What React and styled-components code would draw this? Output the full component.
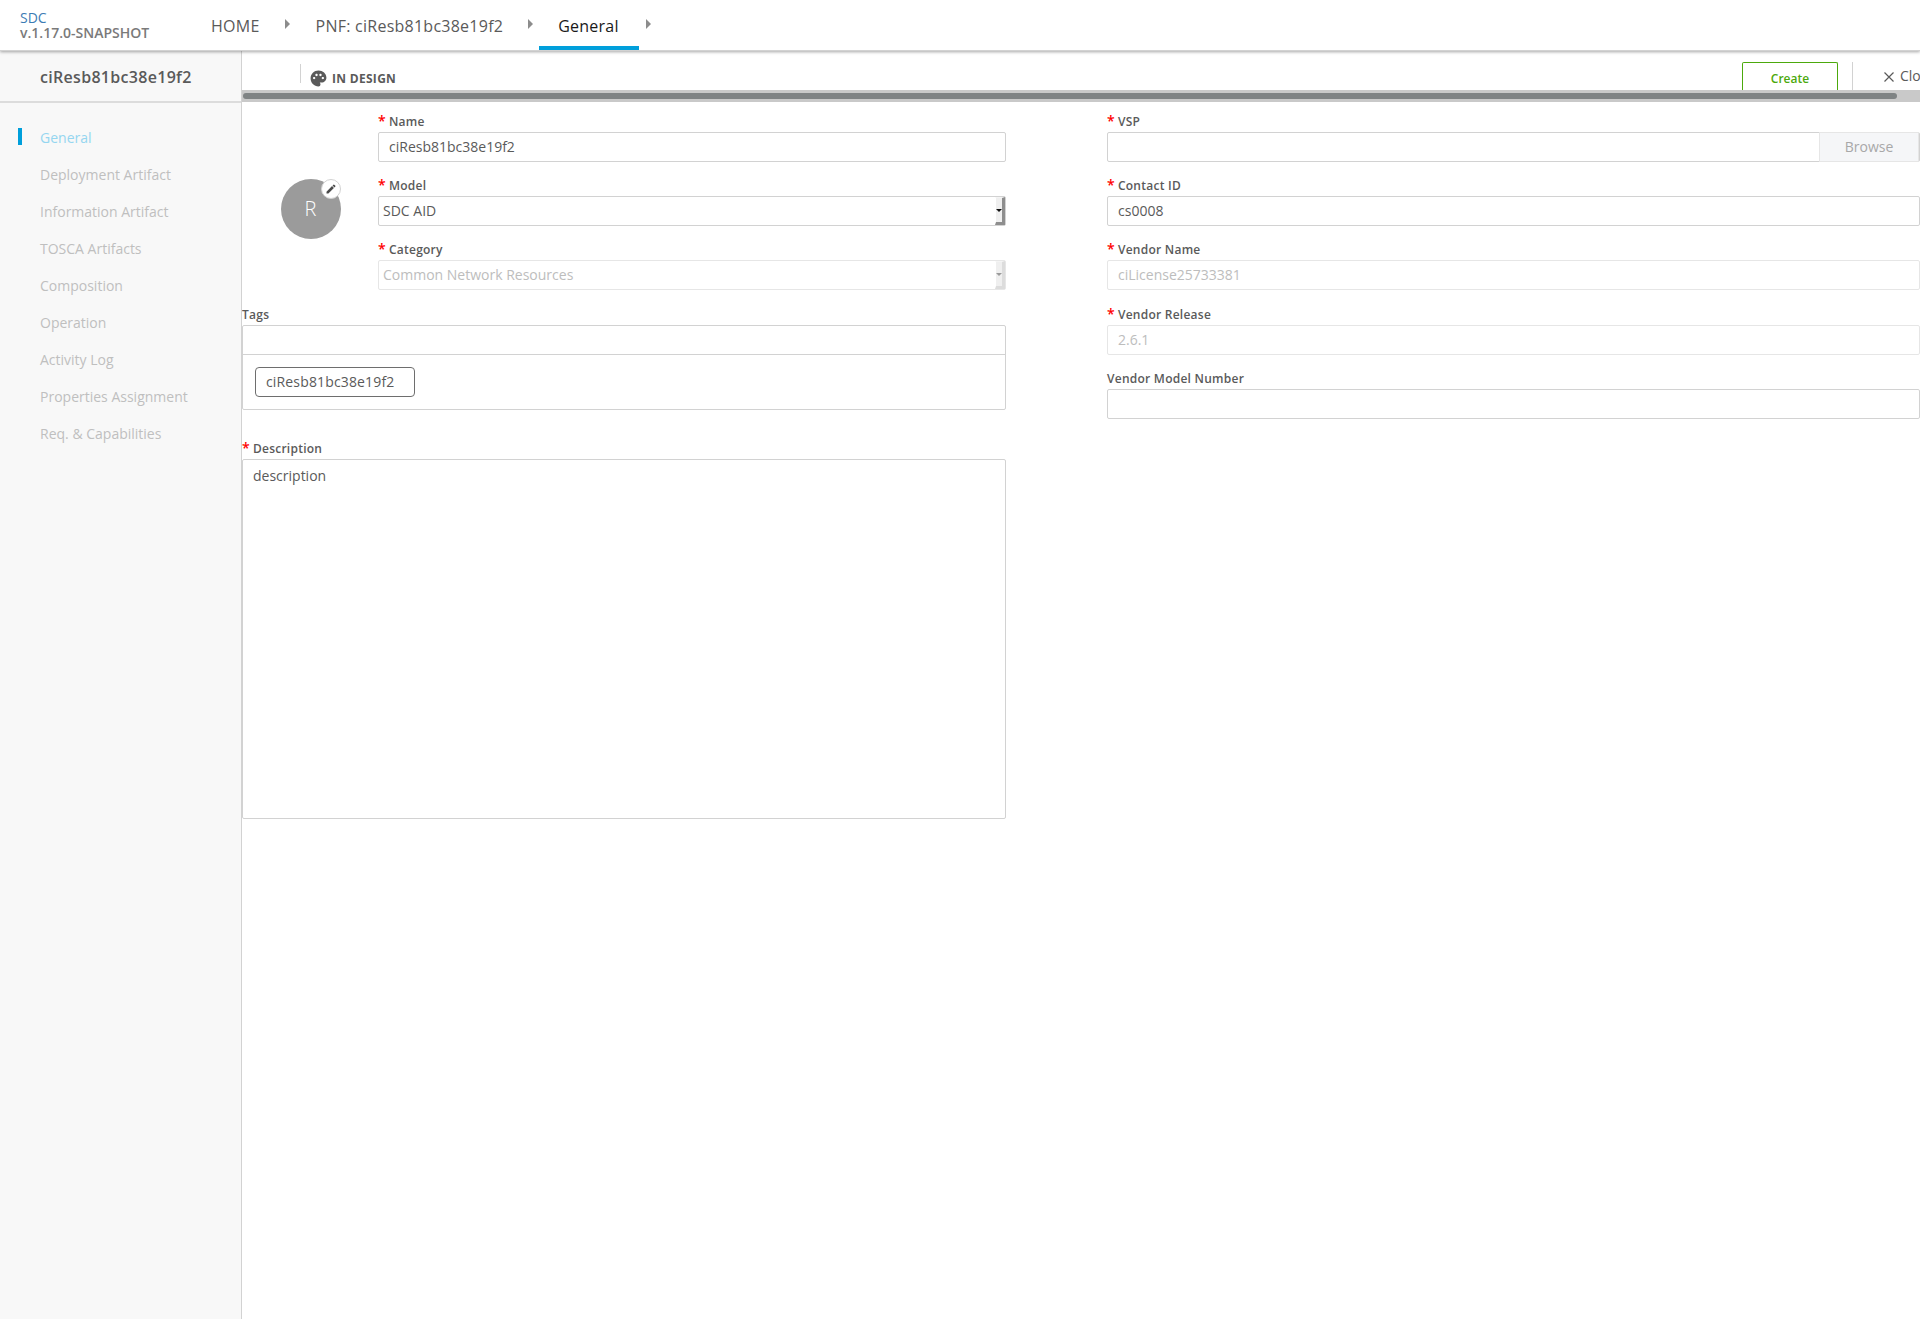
import React from 'react';
import styled, { createGlobalStyle } from 'styled-components';
import { MdPalette, MdEdit } from 'react-icons/md';

const Global = createGlobalStyle`
  html, body { margin: 0; padding: 0; height: 100%; background: #fff; overflow: hidden; }
  body { font-family: "Open Sans", "Liberation Sans", sans-serif; color: #5a5a5a; }
  * { box-sizing: border-box; }
`;

const Page = styled.div`
  width: 1920px; height: 1319px; display: flex; flex-direction: column; overflow: hidden;
`;
const Header = styled.header`
  height: 51px; flex: none; display: flex; align-items: stretch; background: #fff;
  box-shadow: 0 1px 3px rgba(0,0,0,.35); border-bottom: 1px solid #d2d2d2; position: relative; z-index: 2;
`;
const Brand = styled.div`
  width: 211px; padding: 10px 0 0 20px; flex: none;
`;
const BrandName = styled.div`
  color: #3c7cb4; font-size: 14px; font-weight: 500; line-height: 15px;
`;
const BrandVersion = styled.div`
  color: #7a7a7a; font-weight: 600; font-size: 14px; line-height: 16px;
`;
const Crumb = styled.div`
  font-size: 16px; line-height: 52px; height: 50px; color: ${p => (p.$active ? '#191919' : '#5a5a5a')};
  font-weight: ${p => (p.$active ? 500 : 400)}; letter-spacing: .25px; white-space: nowrap;
  padding: 0 ${p => (p.$active ? '19px' : '0')}; margin-left: ${p => p.$ml || 0}px;
  width: ${p => (p.$active ? '100px' : 'auto')};
  border-bottom: ${p => (p.$active ? '4px solid #009fdb' : '0')};
`;
const Chevron = styled.span`
  width: 0; height: 0; flex: none; border-left: 5px solid #8c8c8c; border-top: 5px solid transparent; border-bottom: 5px solid transparent;
  align-self: flex-start; margin-top: 19px; margin-left: ${p => p.$ml}px;
`;
const Body = styled.div`
  flex: 1; display: flex; min-height: 0;
`;
const Sidebar = styled.aside`
  width: 242px; flex: none; background: #f8f8f8; border-right: 1px solid #d2d2d2;
`;
const SideTitle = styled.div`
  height: 52px; border-bottom: 2px solid #dcdcdc; padding-left: 40px; font-size: 16px; font-weight: 600; letter-spacing: .3px; line-height: 52px; color: #5a5a5a;
`;
const Nav = styled.nav`
  padding-top: 16px;
`;
const NavItem = styled.div`
  height: 37px; line-height: 37px; font-size: 14px; padding-left: 40px; position: relative;
  color: ${p => (p.$active ? '#95d6f0' : '#bfbfbf')};
  &::before {
    content: ''; display: ${p => (p.$active ? 'block' : 'none')}; position: absolute; left: 18px; top: 9px; width: 4px; height: 17px; background: #009fdb;
  }
`;
const Main = styled.main`
  flex: 1; min-width: 0; display: flex; flex-direction: column; overflow: hidden;
`;
const Toolbar = styled.div`
  height: 39px; flex: none; display: flex; align-items: flex-start; padding-left: 58px; padding-top: 11px;
`;
const Divider = styled.span`
  width: 1px; height: ${p => p.$h}px; background: #d2d2d2; flex: none; margin-top: ${p => p.$mt}px;
`;
const Status = styled.div`
  display: flex; align-items: center; gap: 4px; margin-left: 8px; width: 91px; flex: none; font-size: 12px; font-weight: 700; letter-spacing: .3px; color: #5a5a5a; height: 28px; margin-top: 2px; white-space: nowrap;
  svg { color: #5a5a5a; flex: none; }
`;
const CreateButton = styled.div`
  margin-left: 1342px; margin-right: 14px; width: 96px; flex: none; height: 28px; border: 1px solid #4ca90c; border-bottom: 0; border-radius: 2px 2px 0 0;
  color: #4ca90c; font-size: 12px; font-weight: 600; text-align: center; line-height: 31px;
`;
const CloseButton = styled.div`
  display: flex; align-items: center; flex: none; margin-left: 30px; gap: 5px; color: #5a5a5a; font-size: 14px; white-space: nowrap; height: 26px;
  svg { margin-top: 3px; }
`;
const ScrollTrack = styled.div`
  height: 12px; flex: none; background: #c9c9c9; padding: 3px 0 0 1px;
`;
const ScrollThumb = styled.div`
  width: 1654px; height: 6px; border-radius: 3px; background: #7f8384;
`;
const Form = styled.div`
  flex: 1; display: grid; grid-template-columns: 764px 813px; column-gap: 101px; align-items: start; padding-top: 10px;
`;
const Column = styled.div`
  display: flex; flex-direction: column; min-width: 0;
`;
const TopRow = styled.div`
  display: flex; align-items: flex-start;
`;
const AvatarCol = styled.div`
  width: 136px; flex: none; padding: 67px 0 0 39px;
`;
const Avatar = styled.div`
  width: 60px; height: 60px; border-radius: 50%; background: #9b9b9b; color: #fff; font-size: 20px; font-weight: 300; padding: 0 1px 2px 0;
  display: flex; align-items: center; justify-content: center; position: relative;
`;
const EditBadge = styled.span`
  position: absolute; right: 0; top: 0; width: 20px; height: 20px; border-radius: 50%; background: #fff; border: 1px solid #d2d2d2;
  display: flex; align-items: center; justify-content: center; color: #4a4a4a;
`;
const Fields = styled.div`
  flex: 1; min-width: 0;
`;
const Field = styled.div`
  height: 64.2px;
`;
const Label = styled.div`
  height: 20px; font-size: 12px; font-weight: 600; letter-spacing: .25px; line-height: 20px; color: #5a5a5a; white-space: nowrap;
`;
const Star = styled.span`
  color: #f00; font-weight: 600; margin-right: 3px; font-size: 14px; line-height: 14px;
`;
const Input = styled.div`
  height: 30px; border: 1px solid ${p => (p.$disabled ? '#e6e6e6' : '#d2d2d2')}; border-radius: 2px; background: #fff;
  font-size: 14px; line-height: 28px; padding-left: ${p => (p.$select ? 4 : 10)}px; position: relative; display: flex;
  color: ${p => (p.$disabled ? '#bdbdbd' : '#5a5a5a')};
`;
const SelectArrow = styled.span`
  position: absolute; right: 0; top: 0; bottom: 0; width: 10px; background: #efefef;
  border-style: solid; border-width: 1px 3px 3px 1px; border-color: #f4f4f4 ${p => (p.$disabled ? '#dcdcdc' : '#8e8e8e')} ${p => (p.$disabled ? '#dcdcdc' : '#8e8e8e')} #fff;
  &::after {
    content: ''; position: absolute; left: 0; top: 11px; border-left: 3px solid transparent; border-right: 3px solid transparent;
    border-top: 3px solid ${p => (p.$disabled ? '#9a9a9a' : '#111')};
  }
`;
const Browse = styled.div`
  margin-left: auto; width: 100px; margin-top: -1px; margin-bottom: -1px; background: #f5f6f8; border: 1px solid #e6e6e6; color: #a8a8a8; text-align: center; line-height: 28px; font-size: 14px;
`;
const TagsBox = styled.div`
  height: 85px; border: 1px solid #d2d2d2; border-radius: 2px; display: flex; flex-direction: column;
`;
const TagsInput = styled.div`
  height: 29px; border-bottom: 1px solid #d2d2d2; flex: none;
`;
const TagsList = styled.div`
  padding: 12px 12px 0;
`;
const Tag = styled.div`
  width: 160px; height: 30px; border: 1px solid #6e6e6e; border-radius: 4px; font-size: 14px; letter-spacing: .15px; line-height: 28px; padding-left: 10px; color: #5a5a5a;
`;
const DescLabel = styled(Label)`
  margin-top: 29px;
`;
const Textarea = styled.div`
  height: 360px; border: 1px solid #d2d2d2; border-radius: 2px; padding: 6px 10px; font-size: 14px; line-height: 20px; color: #5a5a5a;
`;

const Req = () => <Star>*</Star>;
const navItems = ['General', 'Deployment Artifact', 'Information Artifact', 'TOSCA Artifacts', 'Composition', 'Operation', 'Activity Log', 'Properties Assignment', 'Req. & Capabilities'];

const TextField = ({ label, required, value, disabled, select, children }) => (
  <Field>
    <Label>{required && <Req />}{label}</Label>
    <Input $disabled={disabled} $select={select}>
      {value}
      {select && <SelectArrow $disabled={disabled} />}
      {children}
    </Input>
  </Field>
);

export default function App() {
  return (
    <Page>
      <Global />
      <Header>
        <Brand>
          <BrandName>SDC</BrandName>
          <BrandVersion>v.1.17.0-SNAPSHOT</BrandVersion>
        </Brand>
        <Crumb>HOME</Crumb>
        <Chevron $ml={25} />
        <Crumb $ml={26}>PNF: ciResb81bc38e19f2</Crumb>
        <Chevron $ml={25} />
        <Crumb $active $ml={6}>General</Crumb>
        <Chevron $ml={7} />
      </Header>
      <Body>
        <Sidebar>
          <SideTitle>ciResb81bc38e19f2</SideTitle>
          <Nav>
            {navItems.map((n, i) => <NavItem key={n} $active={i === 0}>{n}</NavItem>)}
          </Nav>
        </Sidebar>
        <Main>
          <Toolbar>
            <Divider $h={19} $mt={2} />
            <Status><MdPalette size={19} />IN DESIGN</Status>
            <CreateButton>Create</CreateButton>
            <Divider $h={28} $mt={0} />
            <CloseButton>
              <svg width="12" height="12" viewBox="0 0 12 12" fill="none" stroke="#5a5a5a" strokeWidth="1.2"><path d="M1.5 1.5 10.5 10.5M10.5 1.5 1.5 10.5" /></svg>
              Close
            </CloseButton>
          </Toolbar>
          <ScrollTrack><ScrollThumb /></ScrollTrack>
          <Form>
            <Column>
              <TopRow>
                <AvatarCol>
                  <Avatar>R<EditBadge><MdEdit size={12} /></EditBadge></Avatar>
                </AvatarCol>
                <Fields>
                  <TextField required label="Name" value="ciResb81bc38e19f2" />
                  <TextField required label="Model" value="SDC AID" select />
                  <TextField required label="Category" value="Common Network Resources" select disabled />
                </Fields>
              </TopRow>
              <div>
                <Label>Tags</Label>
                <TagsBox>
                  <TagsInput />
                  <TagsList><Tag>ciResb81bc38e19f2</Tag></TagsList>
                </TagsBox>
              </div>
              <DescLabel><Req />Description</DescLabel>
              <Textarea>description</Textarea>
            </Column>
            <Column>
              <TextField required label="VSP"><Browse>Browse</Browse></TextField>
              <TextField required label="Contact ID" value="cs0008" />
              <TextField required label="Vendor Name" value="ciLicense25733381" disabled />
              <TextField required label="Vendor Release" value="2.6.1" disabled />
              <TextField label="Vendor Model Number" />
            </Column>
          </Form>
        </Main>
      </Body>
    </Page>
  );
}
